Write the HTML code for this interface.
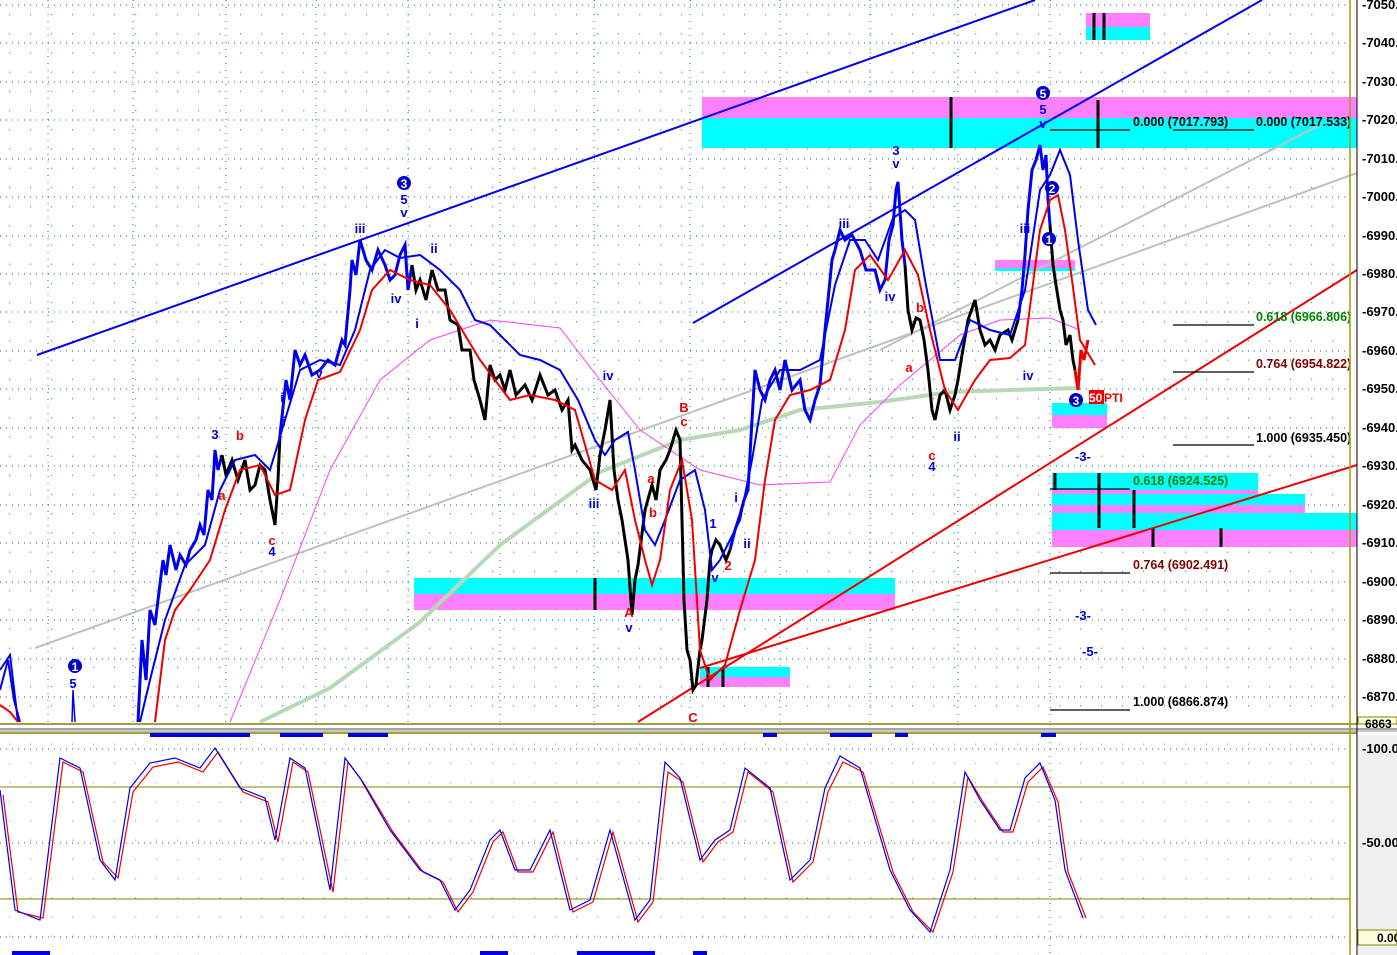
<!DOCTYPE html>
<html><head><meta charset="utf-8"><style>
html,body{margin:0;padding:0;background:#fff;width:1397px;height:955px;overflow:hidden}
svg{display:block}
text{font-family:"Liberation Sans",sans-serif;font-weight:bold}
</style></head><body>
<svg width="1397" height="955" viewBox="0 0 1397 955" xmlns="http://www.w3.org/2000/svg">
<defs>
<pattern id="dots" x="0" y="0" width="21" height="19.2" patternUnits="userSpaceOnUse"><rect x="9" y="14" width="1.2" height="1.2" fill="#007070"/></pattern>
</defs>
<rect x="0" y="0" width="1397" height="955" fill="#fff"/>
<rect x="0" y="0" width="1350" height="723" fill="url(#dots)" opacity="0.7"/>
<rect x="0" y="735" width="1350" height="220" fill="url(#dots)" opacity="0.5"/>
<g stroke="#007878" stroke-width="1" stroke-dasharray="1,5">
<line x1="0" y1="5" x2="1350" y2="5"/><line x1="0" y1="43" x2="1350" y2="43"/><line x1="0" y1="82" x2="1350" y2="82"/><line x1="0" y1="120" x2="1350" y2="120"/><line x1="0" y1="159" x2="1350" y2="159"/><line x1="0" y1="197" x2="1350" y2="197"/><line x1="0" y1="236" x2="1350" y2="236"/><line x1="0" y1="274" x2="1350" y2="274"/><line x1="0" y1="312" x2="1350" y2="312"/><line x1="0" y1="351" x2="1350" y2="351"/><line x1="0" y1="389" x2="1350" y2="389"/><line x1="0" y1="428" x2="1350" y2="428"/><line x1="0" y1="466" x2="1350" y2="466"/><line x1="0" y1="505" x2="1350" y2="505"/><line x1="0" y1="543" x2="1350" y2="543"/><line x1="0" y1="582" x2="1350" y2="582"/><line x1="0" y1="620" x2="1350" y2="620"/><line x1="0" y1="659" x2="1350" y2="659"/><line x1="0" y1="697" x2="1350" y2="697"/>
<line x1="0" y1="749" x2="1350" y2="749"/><line x1="0" y1="843" x2="1350" y2="843"/><line x1="0" y1="937" x2="1350" y2="937"/>
</g>
<g stroke="#007878" stroke-width="1" stroke-dasharray="1,6">
<line x1="48" y1="0" x2="48" y2="723"/><line x1="133" y1="0" x2="133" y2="723"/><line x1="226" y1="0" x2="226" y2="723"/><line x1="316" y1="0" x2="316" y2="723"/><line x1="408" y1="0" x2="408" y2="723"/><line x1="500" y1="0" x2="500" y2="723"/><line x1="594" y1="0" x2="594" y2="723"/><line x1="690" y1="0" x2="690" y2="723"/><line x1="780" y1="0" x2="780" y2="723"/><line x1="870" y1="0" x2="870" y2="723"/><line x1="958" y1="0" x2="958" y2="723"/><line x1="1050" y1="0" x2="1050" y2="955"/>
</g>
<rect x="1086" y="13" width="64" height="14" fill="#ff80ff"/><rect x="1086" y="27" width="64" height="13" fill="#00ffff"/>
<rect x="702" y="97" width="655" height="21" fill="#ff80ff"/><rect x="702" y="118" width="655" height="30" fill="#00ffff"/>
<rect x="414" y="578" width="481" height="16" fill="#00ffff"/><rect x="414" y="594" width="481" height="16" fill="#ff80ff"/>
<rect x="700" y="667" width="90" height="10" fill="#00ffff"/><rect x="700" y="677" width="90" height="10" fill="#ff80ff"/>
<rect x="1052" y="403" width="55" height="12" fill="#00ffff"/><rect x="1052" y="415" width="55" height="13" fill="#ff80ff"/>
<rect x="995" y="260" width="80" height="8" fill="#ff80ff"/><rect x="995" y="268" width="80" height="3" fill="#00ffff"/>
<rect x="1052" y="473" width="206" height="17" fill="#00ffff"/>
<rect x="1052" y="490" width="206" height="4" fill="#ff80ff"/>
<rect x="1052" y="494" width="253" height="11" fill="#00ffff"/>
<rect x="1052" y="505" width="253" height="8" fill="#ff80ff"/>
<rect x="1052" y="513" width="305" height="17" fill="#00ffff"/>
<rect x="1052" y="530" width="305" height="17" fill="#ff80ff"/>
<g stroke="#000" stroke-width="3">
<line x1="1094" y1="13" x2="1094" y2="40"/><line x1="1104" y1="13" x2="1104" y2="40"/>
<line x1="951" y1="97" x2="951" y2="148"/><line x1="1098" y1="100" x2="1098" y2="148"/>
<line x1="595" y1="578" x2="595" y2="610"/><line x1="708" y1="667" x2="708" y2="687"/><line x1="723" y1="667" x2="723" y2="687"/>
<line x1="1055" y1="473" x2="1055" y2="490"/><line x1="1099" y1="473" x2="1099" y2="528"/><line x1="1134" y1="490" x2="1134" y2="528"/><line x1="1153" y1="528" x2="1153" y2="547"/><line x1="1221" y1="528" x2="1221" y2="547"/>
</g>
<g stroke="#c0c0c0" stroke-width="2" fill="none">
<line x1="35" y1="648" x2="1357" y2="173"/>
<line x1="880" y1="350" x2="1320" y2="125"/>
</g>
<g stroke="#0000ee" stroke-width="2">
<line x1="37" y1="355" x2="1035" y2="0"/><line x1="693" y1="323" x2="1262" y2="0"/>
</g>
<g stroke="#ee0000" stroke-width="2">
<line x1="638" y1="722" x2="1357" y2="270"/><line x1="700" y1="668" x2="1357" y2="465"/>
</g>
<polyline fill="none" stroke="#b8d8b8" stroke-width="4" points="260,722 330,688 420,622 500,545 600,472 680,440 740,430 800,410 880,402 950,392 1010,390 1080,388"/>
<polyline fill="none" stroke="#ff40ff" stroke-width="1" points="230,722 280,600 330,470 380,380 430,340 490,320 560,328 600,380 640,430 700,470 760,485 830,482 860,425 900,385 960,335 1000,320 1050,318 1080,330"/>
<!-- price -->
<polyline fill="none" stroke="#0000ee" stroke-width="2" points="0,690 8,660 14,700 20,722"/>
<polyline fill="none" stroke="#0000ee" stroke-width="1.5" points="72,722 73,690 75,722"/>
<polyline fill="none" stroke="#0000ee" stroke-width="3" points="138,722 142,640 146,680 150,610 155,625 158,600 163,560 166,575 170,545 176,570 180,555 186,565 190,550 196,540 200,525 204,535 208,490 212,500 215,450 218,470 222,455"/>
<polyline fill="none" stroke="#000" stroke-width="3" points="222,455 226,475 232,460 238,480 245,460 250,490 255,485 260,465 265,470 270,500 275,525 278,480 280,435"/>
<polyline fill="none" stroke="#0000ee" stroke-width="3" points="280,435 286,380 290,400 295,350 300,365 305,355 312,375 320,370 328,360 335,365 342,340 345,345 350,290 352,260 356,275 360,240 366,260 372,270 378,250 385,265 390,280 395,275 400,255 405,245 408,290 412,265"/>
<polyline fill="none" stroke="#000" stroke-width="3" points="412,265 416,290 420,280 426,300 432,270 438,290 445,290 450,320 458,325 462,350 470,350 474,380 480,400 485,420 490,365 495,380 500,375 505,390 510,370 516,395 525,385 532,400 540,375 548,395 555,390 562,410 568,400 572,450 575,445 582,460 590,470 596,490 600,455 605,430 610,400 614,470 618,500 622,520 628,560 632,615 635,580 638,565 645,510 652,485 656,500 660,470 666,460 670,450 676,430 680,440 682,520 684,600 687,650 690,660 693,690 696,685 700,650 702,640 707,600 710,560 712,550 716,540 720,545 726,560 730,550"/>
<polyline fill="none" stroke="#0000ee" stroke-width="3" points="730,550 735,530 740,515 744,500 748,490 752,420 755,370 760,390 765,400 770,380 775,370 780,390 785,360 792,390 800,380 805,410 810,420 815,400 820,385 825,330 828,300 832,260 835,250 840,230 845,240 852,235 860,250 866,270 875,270 880,290 885,280 889,240 893,225 896,190 898,182 902,240 905,265"/>
<polyline fill="none" stroke="#000" stroke-width="3" points="905,265 908,310 912,330 916,318 920,320 924,340 928,370 932,410 935,420 940,395 945,390 950,410 955,395 958,380 962,355 968,320 975,300 980,330 985,345 990,340 995,350 1000,335 1008,330 1012,340 1018,320"/>
<polyline fill="none" stroke="#0000ee" stroke-width="3" points="1018,320 1022,290 1025,255 1028,210 1032,170 1036,160 1040,145 1043,170 1046,155 1048,200 1050,225"/>
<polyline fill="none" stroke="#000" stroke-width="3" points="1050,225 1053,265 1056,285 1060,310 1063,320 1066,345 1070,335 1073,360 1075,370"/>
<polyline fill="none" stroke="#ee0000" stroke-width="3" points="1075,370 1078,390 1081,350 1084,360 1088,340"/>
<!-- blue MA -->
<polyline fill="none" stroke="#0000ee" stroke-width="2" points="0,670 10,655 18,722"/>
<polyline fill="none" stroke="#0000ee" stroke-width="2" points="140,722 150,680 165,620 185,565 205,545 220,490 235,460 255,455 270,470 285,420 300,370 320,360 340,365 355,330 370,270 385,250 400,258 420,255 440,270 460,290 475,320 490,325 505,340 520,355 540,360 560,370 578,400 595,440 605,455 615,440 628,432 635,470 645,530 655,545 665,520 680,480 695,470 705,510 712,570 720,560 740,520 752,460 762,400 780,370 800,370 820,360 835,285 850,240 865,240 878,260 893,218 905,210 915,220 925,280 940,360 955,360 970,320 990,330 1010,335 1025,290 1040,190 1050,175 1060,150 1070,175 1078,240 1088,310 1096,325"/>
<!-- red MA -->
<polyline fill="none" stroke="#ee0000" stroke-width="2" points="0,705 10,712 18,722"/>
<polyline fill="none" stroke="#ee0000" stroke-width="2" points="155,722 165,640 175,610 190,590 210,560 225,510 240,470 260,465 275,495 290,490 305,420 318,380 340,372 360,330 372,290 390,270 410,280 430,285 450,310 465,335 480,360 495,380 510,400 530,395 555,400 575,410 595,480 612,490 625,470 635,520 645,560 652,585 660,560 670,490 682,460 692,520 700,650 710,680 725,665 740,610 755,560 765,480 775,420 790,395 810,390 830,380 845,330 855,270 870,255 888,280 905,250 918,275 930,330 945,390 958,410 975,380 990,360 1010,358 1025,345 1040,230 1050,200 1058,195 1065,230 1072,280 1080,340 1086,350 1095,365"/>
<g font-size="12" text-anchor="middle">
<circle cx="75" cy="666" r="7" fill="#0000cc"/><text x="75" y="671" fill="#fff">1</text>
<circle cx="404" cy="183" r="7" fill="#0000cc"/><text x="404" y="188" fill="#fff">3</text>
<circle cx="1043" cy="93" r="7" fill="#0000cc"/><text x="1043" y="98" fill="#fff">5</text>
<circle cx="1052" cy="188" r="7" fill="#0000cc"/><text x="1052" y="193" fill="#fff">2</text>
<circle cx="1049" cy="239" r="7" fill="#0000cc"/><text x="1049" y="244" fill="#fff">1</text>
<circle cx="1076" cy="400" r="7" fill="#0000cc"/><text x="1076" y="405" fill="#fff">3</text>
</g>
<g font-size="13" fill="#0000dd" text-anchor="middle">
<text x="73" y="688">5</text><text x="404" y="204">5</text><text x="404" y="217">v</text>
<text x="360" y="233">iii</text><text x="396" y="303">iv</text><text x="417" y="328">i</text><text x="434" y="253">ii</text>
<text x="215" y="439">3</text><text x="282" y="402">i</text><text x="284" y="426">i</text><text x="272" y="556">4</text>
<text x="319" y="378">v</text><text x="608" y="380">iv</text><text x="594" y="508">iii</text>
<text x="629" y="632">v</text><text x="713" y="528">1</text><text x="736" y="502">i</text><text x="747" y="548">ii</text><text x="715" y="582">v</text>
<text x="844" y="228">iii</text><text x="896" y="155">3</text><text x="896" y="168">v</text><text x="890" y="301">iv</text>
<text x="957" y="441">ii</text><text x="932" y="471">4</text><text x="1025" y="233">iii</text><text x="1028" y="380">iv</text>
<text x="1043" y="114">5</text><text x="1043" y="128">v</text>
<text x="1083" y="461">-3-</text><text x="1083" y="620">-3-</text><text x="1090" y="656">-5-</text>
</g>
<g font-size="13" fill="#ee0000" text-anchor="middle">
<text x="240" y="440">b</text><text x="222" y="500">a</text><text x="272" y="545">c</text>
<text x="684" y="412">B</text><text x="684" y="426">c</text><text x="651" y="483">a</text><text x="653" y="517">b</text>
<text x="629" y="617">A</text><text x="693" y="722">C</text><text x="728" y="570">2</text>
<text x="920" y="312">b</text><text x="909" y="372">a</text><text x="932" y="460">c</text>
</g>
<rect x="1089" y="390" width="15" height="14" fill="#ee0000"/>
<text x="1089" y="402" font-size="12" fill="#fff">50</text><text x="1104" y="402" font-size="12" fill="#ee0000">PTI</text>
<g stroke="#000" stroke-width="1.3">
<line x1="1050" y1="130" x2="1130" y2="130"/><line x1="1173" y1="130" x2="1254" y2="130"/>
<line x1="1173" y1="325" x2="1254" y2="325"/><line x1="1173" y1="372" x2="1254" y2="372"/><line x1="1173" y1="445" x2="1254" y2="445"/>
<line x1="1050" y1="489" x2="1130" y2="489"/><line x1="1050" y1="573" x2="1130" y2="573"/><line x1="1050" y1="710" x2="1130" y2="710"/>
</g>
<g font-size="12.5">
<text x="1133" y="126" fill="#000">0.000 (7017.793)</text>
<text x="1256" y="126" fill="#000">0.000 (7017.533)</text>
<text x="1256" y="321" fill="#008000">0.618 (6966.806)</text>
<text x="1256" y="368" fill="#800000">0.764 (6954.822)</text>
<text x="1256" y="442" fill="#000">1.000 (6935.450)</text>
<text x="1133" y="485" fill="#008000">0.618 (6924.525)</text>
<text x="1133" y="569" fill="#800000">0.764 (6902.491)</text>
<text x="1133" y="706" fill="#000">1.000 (6866.874)</text>
</g>
<line x1="0" y1="724" x2="1357" y2="724" stroke="#808000" stroke-width="1.5"/>
<rect x="0" y="728" width="1397" height="4" fill="#c8c8c8"/>
<line x1="0" y1="729" x2="1397" y2="729" stroke="#808080"/>
<line x1="0" y1="733" x2="1357" y2="733" stroke="#808000" stroke-width="1.5"/>
<line x1="0" y1="787" x2="1350" y2="787" stroke="#808000"/>
<line x1="0" y1="899" x2="1350" y2="899" stroke="#808000"/>
<g fill="#0000ee">
<rect x="150" y="733" width="100" height="4"/><rect x="280" y="733" width="43" height="4"/><rect x="348" y="733" width="40" height="4"/><rect x="763" y="733" width="14" height="4"/><rect x="830" y="733" width="42" height="4"/><rect x="895" y="733" width="13" height="4"/><rect x="1041" y="733" width="15" height="4"/>
<rect x="12" y="951" width="38" height="4"/><rect x="480" y="951" width="28" height="4"/><rect x="577" y="951" width="78" height="4"/><rect x="693" y="951" width="14" height="4"/>
</g>
<polyline fill="none" stroke="#ee0000" stroke-width="1.2" points="3,795 18,912 43,918 63,762 83,772 103,862 118,878 133,792 153,767 178,762 203,772 218,752 243,792 268,802 278,842 293,762 308,772 333,892 348,762 363,782 393,832 423,872 443,882 458,912 473,892 493,842 503,832 518,872 533,872 553,832 573,912 593,902 613,832 638,922 653,902 668,772 683,782 703,862 718,842 733,832 748,772 773,792 793,882 813,862 828,792 843,762 863,772 893,872 913,912 933,932 953,872 968,777 983,802 1003,832 1013,832 1028,782 1043,767 1058,802 1068,872 1086,918"/>
<polyline fill="none" stroke="#0000ee" stroke-width="1.2" points="0,790 15,910 40,920 60,758 80,768 100,860 115,880 130,788 150,763 175,758 200,768 215,748 240,788 265,798 275,840 290,758 305,768 330,890 345,758 360,778 390,830 420,870 440,880 455,910 470,890 490,840 500,830 515,870 530,870 550,830 570,910 590,900 610,830 635,920 650,900 665,762 680,778 700,860 715,840 730,830 745,768 770,788 790,880 810,860 825,788 840,756 860,768 890,870 910,910 930,932 950,870 965,772 980,800 1000,830 1010,830 1025,778 1040,763 1055,800 1065,870 1083,918"/>
<line x1="1350" y1="0" x2="1350" y2="955" stroke="#a0a000" stroke-width="1.5"/>
<line x1="1357" y1="0" x2="1357" y2="955" stroke="#000" stroke-width="1"/>
<rect x="1358" y="735" width="39" height="220" fill="#f0f0f0"/>
<g font-size="13" fill="#000" font-weight="bold">
<text x="1362" y="9">-7050.</text><text x="1362" y="47">-7040.</text><text x="1362" y="86">-7030.</text><text x="1362" y="124">-7020.</text><text x="1362" y="163">-7010.</text><text x="1362" y="201">-7000.</text><text x="1362" y="240">-6990.</text><text x="1362" y="278">-6980.</text><text x="1362" y="316">-6970.</text><text x="1362" y="355">-6960.</text><text x="1362" y="393">-6950.</text><text x="1362" y="432">-6940.</text><text x="1362" y="470">-6930.</text><text x="1362" y="509">-6920.</text><text x="1362" y="547">-6910.</text><text x="1362" y="586">-6900.</text><text x="1362" y="624">-6890.</text><text x="1362" y="663">-6880.</text><text x="1362" y="701">-6870.</text>
<text x="1362" y="753">-100.0</text><text x="1362" y="847">-50.00</text>
</g>
<rect x="1358" y="717" width="39" height="7" fill="#ffffe0" stroke="#808000"/>
<text x="1365" y="728" font-size="12" fill="#000">6863</text>
<rect x="1358" y="930" width="39" height="15" fill="#ffffe0" stroke="#808000"/>
<text x="1377" y="942" font-size="12" fill="#000">0.00</text>
</svg>
</body></html>
